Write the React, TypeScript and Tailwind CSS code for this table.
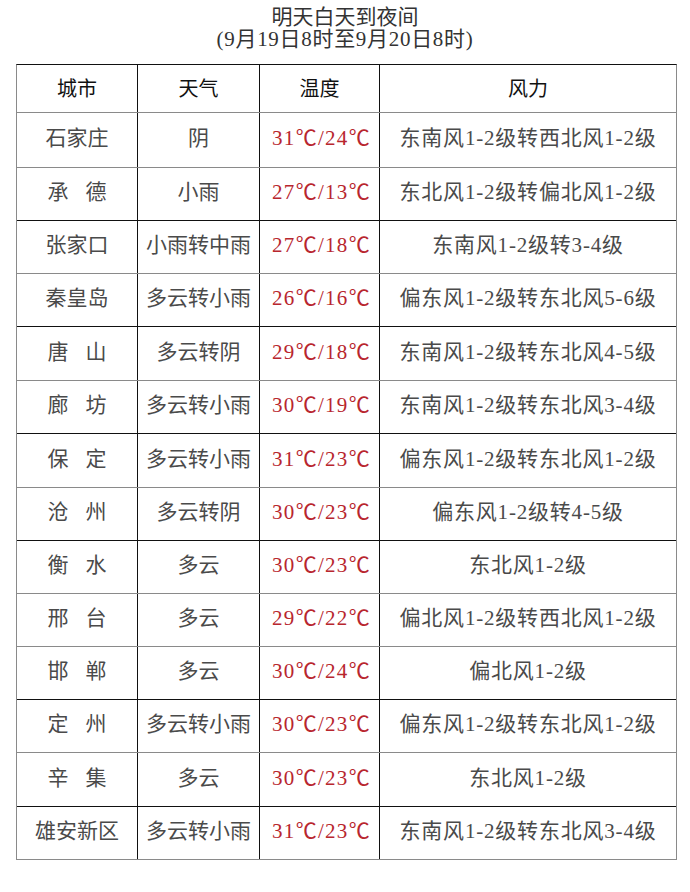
import React from "react";

type Row = { city: string[]; weather: string; temp: string; wind: string; h: number; line: "b" | "g" };

const rows: Row[] = [
  { city: ["石家庄"], weather: "阴", temp: "31℃/24℃", wind: "东南风1-2级转西北风1-2级", h: 54, line: "g" },
  { city: ["承", "德"], weather: "小雨", temp: "27℃/13℃", wind: "东北风1-2级转偏北风1-2级", h: 52, line: "b" },
  { city: ["张家口"], weather: "小雨转中雨", temp: "27℃/18℃", wind: "东南风1-2级转3-4级", h: 52, line: "g" },
  { city: ["秦皇岛"], weather: "多云转小雨", temp: "26℃/16℃", wind: "偏东风1-2级转东北风5-6级", h: 52, line: "b" },
  { city: ["唐", "山"], weather: "多云转阴", temp: "29℃/18℃", wind: "东南风1-2级转东北风4-5级", h: 53, line: "g" },
  { city: ["廊", "坊"], weather: "多云转小雨", temp: "30℃/19℃", wind: "东南风1-2级转东北风3-4级", h: 52, line: "b" },
  { city: ["保", "定"], weather: "多云转小雨", temp: "31℃/23℃", wind: "偏东风1-2级转东北风1-2级", h: 53, line: "g" },
  { city: ["沧", "州"], weather: "多云转阴", temp: "30℃/23℃", wind: "偏东风1-2级转4-5级", h: 52, line: "b" },
  { city: ["衡", "水"], weather: "多云", temp: "30℃/23℃", wind: "东北风1-2级", h: 52, line: "g" },
  { city: ["邢", "台"], weather: "多云", temp: "29℃/22℃", wind: "偏北风1-2级转西北风1-2级", h: 52, line: "g" },
  { city: ["邯", "郸"], weather: "多云", temp: "30℃/24℃", wind: "偏北风1-2级", h: 52, line: "b" },
  { city: ["定", "州"], weather: "多云转小雨", temp: "30℃/23℃", wind: "偏东风1-2级转东北风1-2级", h: 52, line: "g" },
  { city: ["辛", "集"], weather: "多云", temp: "30℃/23℃", wind: "东北风1-2级", h: 53, line: "b" },
  { city: ["雄安新区"], weather: "多云转小雨", temp: "31℃/23℃", wind: "东南风1-2级转东北风3-4级", h: 52, line: "g" },
];

const font = { fontFamily: '"Liberation Serif", "Noto Sans CJK SC", serif' };

export default function App() {
  return (
    <div className="w-[690px] h-[892px] bg-white overflow-hidden" style={font}>
      <div className="pt-[6px] h-[64px] flex flex-col items-center text-[21px] leading-[22px] text-[#333]">
        <div>明天白天到夜间</div>
        <div className="tracking-[0.7px]">(9月19日8时至9月20日8时)</div>
      </div>
      <div className="ml-[16px] w-[661px] border-l border-r border-t border-l-[#8a8a8a] border-r-[#8a8a8a] border-t-[#111]">
        <div className="flex h-[48px] border-b border-[#8a8a8a] text-[20px] text-[#111]">
          <div className="w-[121px] border-r border-[#111] flex items-center justify-center">城市</div>
          <div className="w-[122px] border-r border-[#111] flex items-center justify-center">天气</div>
          <div className="w-[120px] border-r border-[#111] flex items-center justify-center">温度</div>
          <div className="flex-1 flex items-center justify-center">风力</div>
        </div>
        {rows.map((r, i) => (
          <div
            key={i}
            className={`flex border-b text-[21px] ${r.line === "b" ? "border-[#111]" : "border-[#8a8a8a]"}`}
            style={{ height: r.h + 1 }}
          >
            <div className="w-[121px] border-r border-[#111] flex items-center justify-center gap-[17px] text-[#4a4a4a] pb-[2px]">
              {r.city.map((c, j) => (
                <span key={j}>{c}</span>
              ))}
            </div>
            <div className="w-[122px] border-r border-[#111] flex items-center justify-center text-[#4a4a4a] pb-[2px]">
              {r.weather}
            </div>
            <div className="w-[120px] border-r border-[#111] flex items-center justify-center text-[#b8262e] tracking-[1.3px] pl-[4px] pb-[2px]">
              {r.temp}
            </div>
            <div className="flex-1 flex items-center justify-center text-[#4a4a4a] tracking-[0.8px] pb-[2px]">
              {r.wind}
            </div>
          </div>
        ))}
      </div>
    </div>
  );
}
